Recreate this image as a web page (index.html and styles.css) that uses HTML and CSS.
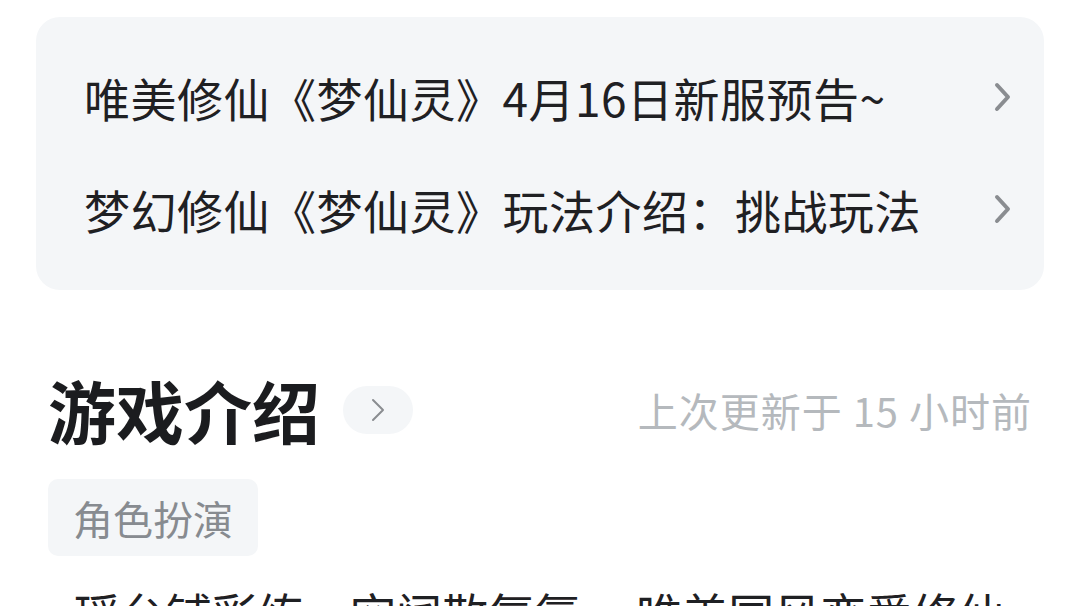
FILE: index.html
```html
<!DOCTYPE html>
<html lang="zh">
<head>
  <meta charset="UTF-8">
  <title>游戏介绍</title>
  <meta name="viewport" content="width=device-width, initial-scale=1.0">
  <link rel="stylesheet" href="styles.css">
</head>
<body>
  <div class="pagina">

    <!-- Noticias -->
    <div class="noticias">
      <div class="noticia">
        <span class="titulo">唯美修仙《梦仙灵》4月16日新服预告~</span>
        <svg class="flecha" width="18" height="30" viewBox="0 0 18 30"><path d="M3 3 L14 15 L3 27" fill="none" stroke="#8a8d91" stroke-width="4" stroke-linecap="round" stroke-linejoin="round"/></svg>
      </div>
      <div class="noticia">
        <span class="titulo">梦幻修仙《梦仙灵》玩法介绍：挑战玩法</span>
        <svg class="flecha" width="18" height="30" viewBox="0 0 18 30"><path d="M3 3 L14 15 L3 27" fill="none" stroke="#8a8d91" stroke-width="4" stroke-linecap="round" stroke-linejoin="round"/></svg>
      </div>
    </div>

    <!-- Introduccion -->
    <div class="intro">
      <div class="intro-cabecera">
        <h2>游戏介绍</h2>
        <div class="pildora">
          <svg width="14" height="24" viewBox="0 0 14 24"><path d="M2 2 L12 12 L2 22" fill="none" stroke="#8a8d91" stroke-width="2" stroke-linecap="round" stroke-linejoin="round"/></svg>
        </div>
        <span class="actualizado">上次更新于 15 小时前</span>
      </div>
      <div class="etiquetas">
        <span class="etiqueta">角色扮演</span>
      </div>
      <p class="descripcion">瑶台铺彩练，空阔散氤氲。 唯美国风恋爱修仙</p>
    </div>
  </div>
</body>
</html>
```

FILE: styles.css
```css
body {
  margin: 0;
  background: #fff;
  font-family: "Noto Sans CJK SC", "Noto Sans", sans-serif;
  color: #1f2023;
  overflow: hidden;
}

.pagina {
  width: 1080px;
  height: 606px;
  overflow: hidden;
}

.noticias {
  margin: 17px 36px 0 36px;
  padding: 24px 32px 25px 48px;
  background: #f4f6f8;
  border-radius: 24px;
}

.noticia {
  display: flex;
  align-items: center;
  justify-content: space-between;
  height: 112px;
}

.titulo {
  font-size: 46px;
  letter-spacing: 0.5px;
  line-height: 1;
  color: #1f2023;
  white-space: nowrap;
}

.flecha {
  flex-shrink: 0;
}

.intro {
  padding: 0 48px 0 48px;
}

.intro-cabecera {
  display: flex;
  align-items: center;
  height: 80px;
  margin-top: 80px;
}

h2 {
  margin: 0;
  font-size: 68px;
  font-weight: bold;
  line-height: 1;
  color: #1b1c1f;
}

.pildora {
  margin-left: 23px;
  width: 70px;
  height: 48px;
  border-radius: 24px;
  background: #f4f6f8;
  display: flex;
  align-items: center;
  justify-content: center;
}

.actualizado {
  margin-left: auto;
  font-size: 40px;
  letter-spacing: 1px;
  color: #b5b9bd;
  white-space: nowrap;
}

.etiquetas {
  display: flex;
  margin-top: 29px;
}

.etiqueta {
  display: flex;
  align-items: center;
  height: 77px;
  padding: 0 25px;
  background: #f4f6f8;
  border-radius: 10px;
  font-size: 40px;
  color: #878b90;
}

.descripcion {
  margin: 24px 0 0 0;
  padding-left: 26px;
  font-size: 46px;
  line-height: 1.4;
  color: #1f2023;
  white-space: nowrap;
}
```
